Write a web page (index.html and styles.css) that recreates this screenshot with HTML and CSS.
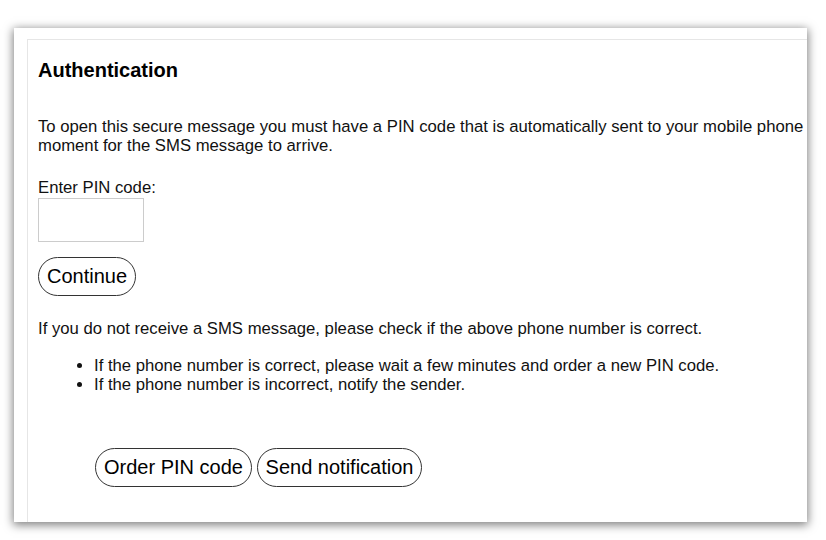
FILE: index.html
```html
<!DOCTYPE html>
<html lang="en">
<head>
<meta charset="utf-8">
<title>Authentication</title>
<link rel="stylesheet" href="styles.css">
</head>
<body>
<div class="window">
  <div class="panel">
    <h2 class="title">Authentication</h2>
    <p class="intro">To open this secure message you must have a PIN code that is automatically sent to your mobile phone number. Please wait a moment for the SMS message to arrive.</p>
    <label class="pin-label" for="pin">Enter PIN code:</label>
    <input class="pin-input" id="pin" type="text">
    <div class="row">
      <button class="pill" type="button">Continue</button>
    </div>
    <p class="note">If you do not receive a SMS message, please check if the above phone number is correct.</p>
    <ul class="tips">
      <li>If the phone number is correct, please wait a few minutes and order a new PIN code.</li>
      <li>If the phone number is incorrect, notify the sender.</li>
    </ul>
    <div class="actions">
      <button class="pill" type="button">Order PIN code</button> <button class="pill" type="button">Send notification</button>
    </div>
  </div>
</div>
</body>
</html>
```

FILE: styles.css
```css
html, body {
  margin: 0;
  padding: 0;
  background: #ffffff;
}

body {
  font-family: "Liberation Sans", Arial, sans-serif;
  font-size: 16.7px;
  color: #111111;
  padding: 28px 0 0 14px;
  height: 540px;
  box-sizing: border-box;
  overflow: hidden;
}

.window {
  width: 793px;
  height: 494px;
  background: #ffffff;
  box-shadow: 0 2px 9px 1px rgba(0, 0, 0, 0.5);
  overflow: hidden;
  padding: 11px 0 0 13px;
  box-sizing: border-box;
}

.panel {
  width: 1060px;
  height: 600px;
  border-left: 1px solid #e6e6e6;
  border-top: 1px solid #e6e6e6;
  padding: 10px;
  box-sizing: border-box;
}

.title {
  font-size: 20px;
  font-weight: bold;
  line-height: 23px;
  margin: 9px 0 35px;
  color: #000000;
}

.intro {
  margin: 0 0 24px;
  width: 965px;
  line-height: 19px;
}

.pin-label {
  display: block;
  line-height: 18px;
  margin-bottom: 1px;
}

.pin-input {
  display: block;
  width: 106px;
  height: 44px;
  box-sizing: border-box;
  border: 1px solid #cccccc;
  margin: 0;
  padding: 2px 4px;
  font: inherit;
}

.row {
  margin-top: 15px;
}

.pill {
  font-family: "Liberation Sans", Arial, sans-serif;
  font-size: 20px;
  line-height: 23px;
  color: #000000;
  background: #ffffff;
  border: 1px solid #333333;
  border-radius: 20px;
  padding: 7px 8px;
  margin: 0;
}

.note {
  margin: 23px 0 18px;
  line-height: 19px;
}

.tips {
  margin: 0;
  padding-left: 56px;
  line-height: 19px;
}

.tips li {
  margin: 0;
}

.actions {
  margin-top: 54px;
  padding-left: 57px;
}
```
